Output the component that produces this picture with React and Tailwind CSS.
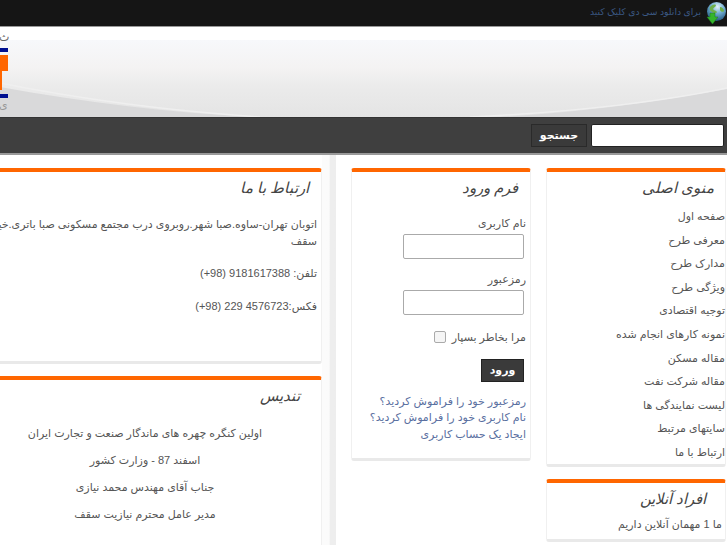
const menuItems = [
    { label: 'صفحه اول', cls: 'pe-[3px]' },
    { label: 'معرفی طرح', cls: 'pe-[3px]' },
    { label: 'مدارک طرح', cls: 'pe-[3px]' },
    { label: 'ویژگی طرح', cls: 'pe-[3px]' },
    { label: 'توجیه اقتصادی', cls: 'pe-[3px]' },
    { label: 'نمونه کارهای انجام شده', cls: 'pe-[3px]' },
    { label: 'مقاله مسکن', cls: 'pe-[7px]' },
    { label: 'مقاله شرکت نفت', cls: 'pe-[8px]' },
    { label: 'لیست نمایندگی ها', cls: 'pe-[3px]' },
    { label: 'سایتهای مرتبط', cls: 'pe-[11px]' },
    { label: 'ارتباط با ما', cls: 'pe-[3px]' },
];

const awardLines = [
    'اولین کنگره چهره های ماندگار صنعت و تجارت ایران',
    'اسفند 87 - وزارت کشور',
    'جناب آقای مهندس محمد نیازی',
    'مدیر عامل محترم نیازیت سقف',
];

function Card({ className = '', children }) {
    return (
        <div className={`rounded-[3px] border-x border-b-[3px] border-x-[#f0f0f0] border-b-[#e9e9e9] border-t-4 border-t-[#ff6600] bg-white ${className}`}>
            {children}
        </div>
    );
}

function CardTitle({ className = '', children }) {
    return <h3 className={`text-[15px] leading-5 font-normal text-[#444] italic ${className}`}>{children}</h3>;
}

function GlobeIcon() {
    return (
        <svg width="22" height="24" viewBox="0 0 22 24">
            <defs>
                <radialGradient id="globe" cx="0.55" cy="0.25" r="0.8">
                    <stop offset="0" stopColor="#e4f2f8" />
                    <stop offset="0.45" stopColor="#6fabd0" />
                    <stop offset="1" stopColor="#1c4f78" />
                </radialGradient>
            </defs>
            <circle cx="11.500" cy="10.500" r="9.500" fill="url(#globe)" />
            <path d="M5 6c2-2 4-3 6-2 0 2-2 2-3 4 1 2 3 1 4 3-1 2-3 1-5 0-2-1-3-3-2-5zM15 6c2 0 4 2 4 4-1 2-4 0-4-1z" fill="#6fb04a" />
            <path d="M5 12h5v4h3l-5.500 7L2 16h3z" fill="#35b52c" stroke="#1f7a1c" strokeWidth="0.5" />
        </svg>
    );
}

function HeaderArt() {
    return (
        <svg className="absolute inset-0 h-full w-full" viewBox="0 0 727 90" preserveAspectRatio="none">
            <defs>
                <linearGradient id="sky" x1="0" y1="0" x2="0" y2="1">
                    <stop offset="0" stopColor="#f7f8fb" />
                    <stop offset="0.35" stopColor="#f4f3f3" />
                    <stop offset="0.6" stopColor="#ebebeb" />
                    <stop offset="1" stopColor="#e4e4e4" />
                </linearGradient>
            </defs>
            <rect width="727" height="13" fill="#fff" />
            <rect y="13" width="727" height="77" fill="url(#sky)" />
            <path d="M0 60C90 76 170 86 260 90H500C600 84 670 72 727 62V90H0Z" fill="#d9d9da" />
            <path d="M0 56C80 72 170 84 260 90" fill="none" stroke="#efefef" strokeWidth="1.500" />
            <path d="M470 90C580 85 670 73 727 61" fill="none" stroke="#efefef" strokeWidth="1.500" />
            <rect y="21" width="8" height="4" fill="#000f90" />
            <path d="M0 28H8V44H2V63H0Z" fill="#ff6600" />
            <rect y="67" width="8" height="4" fill="#000f90" />
        </svg>
    );
}

export default function App() {
    return (
        <div dir="rtl" className="h-[545px] w-[727px] overflow-hidden bg-white font-['Liberation_Sans','DejaVu_Sans',sans-serif] text-[11px] text-[#555]">
            {/* top strip */}
            <div className="flex h-[27px] items-center gap-1 border-b border-[#999] bg-[#151515]">
                <GlobeIcon />
                <a className="text-[9.2px] text-[#3c5a86]">برای دانلود سی دی کلیک کنید</a>
            </div>

            {/* header */}
            <div className="relative h-[90px] overflow-hidden">
                <HeaderArt />
                <span className="absolute top-[2px] left-[-1px] text-[11px] text-[#666]">ث</span>
                <span className="absolute bottom-[4px] left-[-1px] text-[11px] text-[#999]">ی</span>
            </div>

            {/* search */}
            <div className="flex h-[38px] items-center gap-1 border-t border-b-2 border-t-[#333] border-b-[#999] bg-[#3f3f3f] pr-[3px]">
                <input className="h-[23px] w-[133px] rounded-[2px] border border-[#222] bg-white" />
                <button className="h-[23px] w-[56px] border border-[#2a2a2a] bg-[#3a3a3a] text-[11px] font-bold text-white">جستجو</button>
            </div>

            {/* columns */}
            <div className="flex items-stretch">
                <div className="flex w-[196px] shrink-0 flex-col gap-[12px] pt-[13px] pr-[1px]">
                    <Card className="h-[299px] w-[180px]">
                        <CardTitle className="mt-[6px] pr-[11px]">منوی اصلی</CardTitle>
                        <ul className="mt-[7px]">
                            {menuItems.map((item) => (
                                <li key={item.label} className={`h-[23.6px] leading-[23.6px] ${item.cls}`}>{item.label}</li>
                            ))}
                        </ul>
                    </Card>
                    <Card className="h-[63px] w-[180px]">
                        <CardTitle className="mt-[6px] pr-[19px]">افراد آنلاین</CardTitle>
                        <p className="mt-[5px] pr-[3px] leading-5">ما 1 مهمان آنلاین داریم</p>
                    </Card>
                </div>

                <div className="w-[195px] shrink-0 pt-[13px]">
                    <Card className="h-[293px] w-[180px]">
                        <CardTitle className="mt-[6px] pr-[12px]">فرم ورود</CardTitle>
                        <div className="mt-[15px] flex flex-col pr-[4px]">
                            <label className="leading-5">نام کاربری</label>
                            <input className="mt-[1px] mr-[2px] h-[25px] w-[121px] rounded-[2px] border border-[#aaa] bg-white" />
                            <label className="mt-[10px] leading-5">رمزعبور</label>
                            <input className="mt-[1px] mr-[2px] h-[25px] w-[121px] rounded-[2px] border border-[#aaa] bg-white" />
                            <div className="mt-[14px] flex items-center gap-[6px]">
                                <span>مرا بخاطر بسپار</span>
                                <span className="h-[12px] w-[12px] rounded-[2px] border border-[#aaa] bg-[#f5f5f5]" />
                            </div>
                            <button className="mt-[13px] mr-[2px] h-[23px] w-[43px] border border-[#222] bg-[#3a3a3a] text-[11px] font-bold text-white">ورود</button>
                            <div className="mt-[11px] flex flex-col leading-[16.500px] text-[#5a6f9f]">
                                <a>رمزعبور خود را فراموش کردید؟</a>
                                <a>نام کاربری خود را فراموش کردید؟</a>
                                <a>ایجاد یک حساب کاربری</a>
                            </div>
                        </div>
                    </Card>
                </div>

                <div className="h-[391px] w-[14px] shrink-0 bg-gradient-to-l from-[#eeeeee] from-40% to-[#fbfbfb] to-50%" />

                <div className="flex w-[354px] shrink-0 flex-col gap-[12px] pt-[13px]">
                    <Card className="h-[196px]">
                        <CardTitle className="mt-[6px] pr-[12px]">ارتباط با ما</CardTitle>
                        <div className="mt-[18px] pr-[4px] leading-[17px] whitespace-nowrap">
                            <p>اتوبان تهران-ساوه.صبا شهر.روبروی درب مجتمع مسکونی صبا باتری.خیابان صنعت</p>
                            <p>سقف</p>
                            <p className="mt-[15px]">تلفن: 9181617388 (98+)</p>
                            <p className="mt-[16px]">فکس:4576723 229 (98+)</p>
                        </div>
                    </Card>
                    <Card className="h-[200px]">
                        <CardTitle className="mt-[6px] pr-[21px]">تندیس</CardTitle>
                        <div className="mt-[14px] text-center">
                            {awardLines.map((line) => (
                                <p key={line} className="leading-[27px]">{line}</p>
                            ))}
                        </div>
                    </Card>
                </div>
            </div>
        </div>
    );
}
